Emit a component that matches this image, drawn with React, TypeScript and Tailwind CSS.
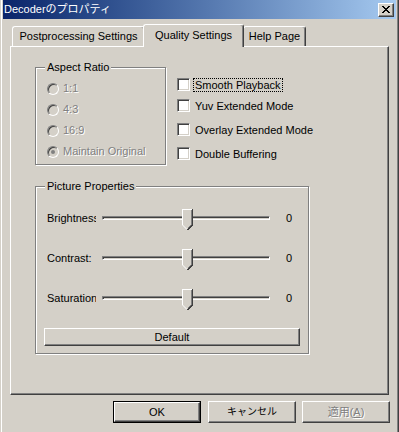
import React from "react";

const etched = "border border-[#808080] shadow-[inset_1px_1px_#fff,1px_1px_#fff]";
const raised =
  "border border-t-white border-l-white border-b-[#404040] border-r-[#404040] shadow-[inset_-1px_-1px_#808080] bg-[#D4D0C8]";

function CloseButton() {
  const px: [number, number][] = [];
  const rows = ["XX....XX", ".XX..XX.", "..XXXX..", "...XX...", "..XXXX..", ".XX..XX.", "XX....XX"];
  rows.forEach((r, y) => r.split("").forEach((c, x) => c === "X" && px.push([x, y])));
  return (
    <div className={`w-[16px] h-[14px] flex items-center justify-center ${raised}`}>
      <svg width="8" height="7" viewBox="0 0 8 7" shapeRendering="crispEdges">
        {px.map(([x, y]) => (
          <rect key={`${x}-${y}`} x={x} y={y} width="1" height="1" fill="#000" />
        ))}
      </svg>
    </div>
  );
}

function Thumb() {
  return (
    <svg width="11" height="21" viewBox="0 0 11 21" shapeRendering="crispEdges" className="absolute left-[79px] top-[-8px]">
      <polygon points="0,0 11,0 11,16 5.5,21 0,16" fill="#D4D0C8" />
      <polyline points="0.5,16 0.5,0.5 10,0.5" fill="none" stroke="#fff" strokeWidth="1" />
      <polyline points="0.5,16 5,20.5" fill="none" stroke="#fff" strokeWidth="1" shapeRendering="auto" />
      <polyline points="10.5,0 10.5,16 5.5,21" fill="none" stroke="#404040" strokeWidth="1" />
      <polyline points="9.5,1 9.5,15.5 5.5,19.5" fill="none" stroke="#808080" strokeWidth="1" />
    </svg>
  );
}

function SliderRow({ label }: { label: string }) {
  return (
    <div className="h-[40px] flex items-center">
      <div className="ml-[3px] w-[49px] overflow-hidden whitespace-nowrap leading-[13px]">{label}</div>
      <div className="ml-[6px] w-[168px] h-[4px] relative border border-t-[#808080] border-l-[#808080] border-b-white border-r-white bg-[#D4D0C8] shadow-[inset_1px_1px_#404040]">
        <Thumb />
      </div>
      <div className="ml-[16px] leading-[13px]">0</div>
    </div>
  );
}

function Radio({ label, checked }: { label: string; checked?: boolean }) {
  return (
    <div className="h-[21px] flex items-center">
      <div className="w-[12px] h-[12px] rounded-full border border-t-[#808080] border-l-[#808080] border-b-white border-r-white bg-[#D4D0C8] shadow-[inset_1px_1px_#404040] flex items-center justify-center">
        {checked && <div className="w-[4px] h-[4px] rounded-full bg-[#808080]" />}
      </div>
      <span className="ml-[4px] text-[#808080] [text-shadow:1px_1px_0_#fff] leading-[13px]">{label}</span>
    </div>
  );
}

function Check({ label, focus }: { label: string; focus?: boolean }) {
  return (
    <div className="h-[13px] flex items-center">
      <div className="w-[13px] h-[13px] bg-white border border-t-[#808080] border-l-[#808080] border-b-white border-r-white shadow-[inset_1px_1px_#404040,inset_-1px_-1px_#D4D0C8]" />
      <span
        className={`ml-[3px] px-[1px] leading-[12px] border ${focus ? "border-dotted border-black" : "border-transparent"}`}
      >
        {label}
      </span>
    </div>
  );
}

export default function App() {
  return (
    <div className="w-[399px] h-[432px] overflow-hidden bg-[#D4D0C8] px-[3px] shadow-[inset_1px_0_#D4D0C8,inset_2px_0_#fff,inset_-1px_0_#404040,inset_-2px_0_#808080] font-['Liberation_Sans','Noto_Sans_CJK_JP',sans-serif] text-[11px] leading-none text-black">
      {/* title bar */}
      <div className="h-[19px] flex items-center justify-between bg-linear-to-r from-[#0A246A] to-[#A6CAF0] pl-[1px] pr-[2px]">
        <span className="text-white text-[11px] leading-[13px]">Decoderのプロパティ</span>
        <CloseButton />
      </div>

      {/* tabs + panel */}
      <div className="ml-[7px] mt-[5px]">
        <div className="h-[22px] flex items-end">
          <div className="ml-[2px] w-[133px] h-[20px] flex items-center justify-center rounded-t-[3px] border-t border-l border-r border-t-white border-l-white border-r-[#404040] shadow-[inset_-1px_0_#808080] whitespace-nowrap">
            Postprocessing Settings
          </div>
          <div className="relative z-10 ml-[-2px] w-[101px] h-[23px] -mb-[1px] pb-[2px] flex items-center justify-center rounded-t-[3px] border-t border-l border-r border-t-white border-l-white border-r-[#404040] shadow-[inset_-1px_0_#808080] bg-[#D4D0C8] whitespace-nowrap">
            Quality Settings
          </div>
          <div className="ml-[-1px] w-[63px] h-[20px] flex items-center justify-center rounded-t-[3px] border-t border-l border-r border-t-white border-l-white border-r-[#404040] shadow-[inset_-1px_0_#808080] whitespace-nowrap">
            Help Page
          </div>
        </div>

        <div className="w-[379px] h-[349px] border border-t-white border-l-white border-b-[#404040] border-r-[#404040] shadow-[inset_-1px_-1px_#808080] pl-[24px] pt-[20px]">
          <div className="flex items-start">
            <div className={`relative w-[131px] h-[98px] pt-[10px] pl-[11px] ${etched}`}>
              <span className="absolute left-[9px] top-[-7px] px-[2px] bg-[#D4D0C8] leading-[13px]">Aspect Ratio</span>
              <Radio label="1:1" />
              <Radio label="4:3" />
              <Radio label="16:9" />
              <Radio label="Maintain Original" checked />
            </div>
            <div className="ml-[11px] mt-[11px] flex flex-col">
              <Check label="Smooth Playback" focus />
              <div className="mt-[8px]">
                <Check label="Yuv Extended Mode" />
              </div>
              <div className="mt-[11px]">
                <Check label="Overlay Extended Mode" />
              </div>
              <div className="mt-[11px]">
                <Check label="Double Buffering" />
              </div>
            </div>
          </div>

          <div className={`relative mt-[21px] w-[274px] h-[168px] px-[8px] pt-[11px] pb-[7px] ${etched}`}>
            <span className="absolute left-[9px] top-[-7px] px-[2px] bg-[#D4D0C8] leading-[13px]">Picture Properties</span>
            <SliderRow label="Brightness:" />
            <SliderRow label="Contrast:" />
            <SliderRow label="Saturation:" />
            <div className={`mt-[10px] w-full h-[18px] flex items-center justify-center ${raised}`}>Default</div>
          </div>
        </div>
      </div>

      {/* bottom buttons */}
      <div className="mt-[6px] ml-[110px] flex">
        <div className="w-[88px] h-[22px] border border-black mr-[7px]">
          <div className={`w-full h-full flex items-center justify-center ${raised}`}>OK</div>
        </div>
        <div className={`w-[88px] h-[22px] mr-[6px] flex items-center justify-center ${raised}`}>
          <span className="text-[10px]">キャンセル</span>
        </div>
        <div className={`w-[88px] h-[22px] flex items-center justify-center ${raised}`}>
          <span className="text-[#808080] [text-shadow:1px_1px_0_#fff]">
            適用(<span className="underline">A</span>)
          </span>
        </div>
      </div>
    </div>
  );
}
